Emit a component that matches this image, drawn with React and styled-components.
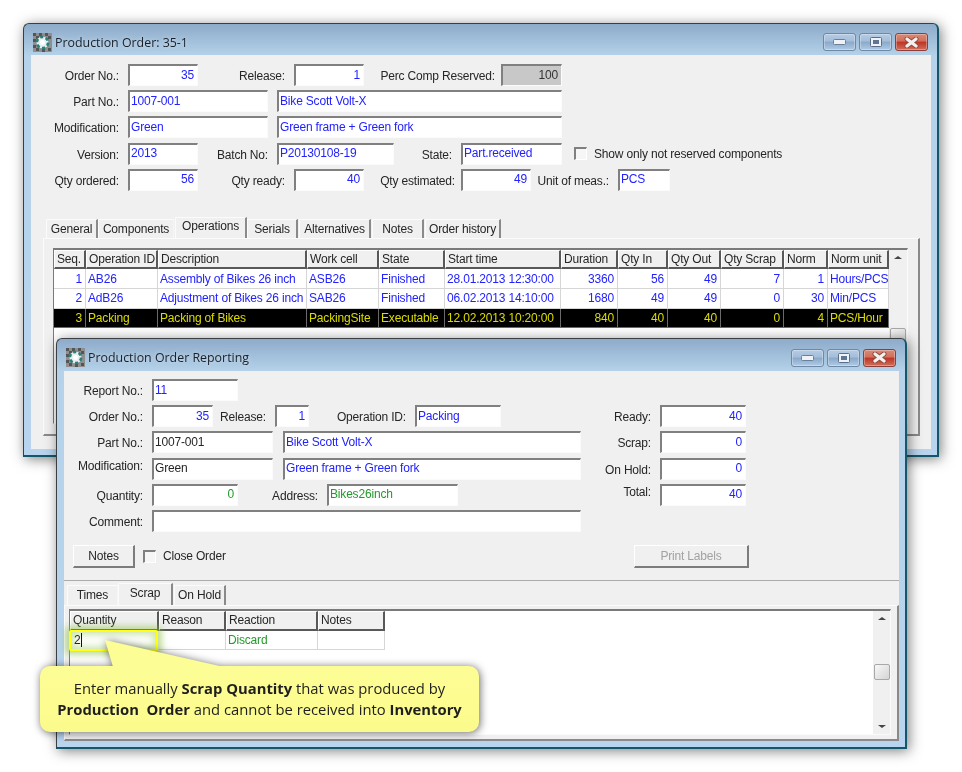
import React from "react";
import styled, { createGlobalStyle } from "styled-components";

const GlobalStyle = createGlobalStyle`
  html, body { margin: 0; padding: 0; background: #fff; }
  body { font-family: "Liberation Sans", Arial, sans-serif; font-size: 12px; letter-spacing: -0.18px; color: #262626; }
`;

// --- Desktop and windows ---
const Desktop = styled.div`
  position: relative;
  width: 962px;
  height: 772px;
  overflow: hidden;
  background: #fff;
  filter: blur(0.4px);
`;

const Shell = styled.section`
  position: absolute;
  left: ${(p) => p.$left}px;
  top: ${(p) => p.$top}px;
  width: ${(p) => p.$w}px;
  height: ${(p) => p.$h}px;
  box-sizing: border-box;
  display: flex;
  flex-direction: column;
  padding: 0 6px 6px 7px;
  border: 1px solid #3a3f44;
  border-right: 2px solid #14566a;
  border-bottom: 2px solid #14566a;
  border-radius: 6px 6px 0 0;
  background: linear-gradient(#8dabca 0, #b5d2ea 32px, #b8d4ee 100%);
  box-shadow: 2px 2px 13px rgba(0, 0, 0, 0.5);
`;

const TitleBar = styled.header`
  flex: none;
  height: ${(p) => p.$h}px;
  box-sizing: border-box;
  display: flex;
  align-items: center;
  padding: 5px 3px 0 2px;
`;

const TitleText = styled.span`
  margin-left: 3px;
  font-family: "Open Sans", sans-serif;
  font-size: 12.4px;
  letter-spacing: 0;
  color: #18202a;
  text-shadow: 0 0 4px rgba(255, 255, 255, 0.5);
`;

const Controls = styled.div`
  margin-left: auto;
  display: flex;
  gap: 3px;
`;

const CtrlButton = styled.div`
  width: 33px;
  height: 18px;
  box-sizing: border-box;
  display: flex;
  align-items: center;
  justify-content: center;
  border: 1px solid ${(p) => (p.$close ? "#8a4038" : "#6f88a5")};
  border-radius: 3px;
  box-shadow: inset 0 0 0 1px rgba(255, 255, 255, 0.3);
  background: ${(p) =>
    p.$close
      ? "linear-gradient(#d98a78 0, #cf6f5c 45%, #bd3323 50%, #d0705c 100%)"
      : "linear-gradient(#b5cce4 0, #a3bdd9 45%, #8aa8c8 50%, #aecce6 100%)"};
`;

const Client = styled.div`
  flex: 1;
  min-height: 0;
  display: flex;
  flex-direction: column;
  background: #f0f0f0;
`;

// --- Form parts ---
const Form = styled.div`
  display: flex;
  flex-direction: column;
  gap: 4.2px;
  padding-top: ${(p) => p.$top}px;
`;

const Row = styled.div`
  display: flex;
  align-items: center;
  height: 22px;
`;

const Label = styled.span`
  flex: none;
  width: ${(p) => p.$w}px;
  box-sizing: border-box;
  padding-right: ${(p) => p.$pad ?? 9}px;
  text-align: right;
  white-space: nowrap;
  position: relative;
  top: ${(p) => (p.$raised ? -3 : 1)}px;
`;

const Field = styled.div`
  flex: none;
  width: ${(p) => p.$w}px;
  height: 22px;
  margin-left: ${(p) => p.$ml ?? 0}px;
  box-sizing: border-box;
  padding: 0 3px 2px 1px;
  display: flex;
  align-items: center;
  justify-content: ${(p) => (p.$right ? "flex-end" : "flex-start")};
  white-space: nowrap;
  border-top: 2px solid #808080;
  border-left: 2px solid #808080;
  border-right: 1px solid #fbfbfb;
  border-bottom: 1px solid #fbfbfb;
  background: ${(p) => (p.$gray ? "#c8c8c8" : "#fff")};
  color: ${(p) => p.$color || "#2222ff"};
`;

const Check = styled.span`
  flex: none;
  width: 13px;
  height: 13px;
  margin-left: ${(p) => p.$ml}px;
  box-sizing: border-box;
  border-top: 2px solid #808080;
  border-left: 2px solid #808080;
  border-right: 1px solid #fff;
  border-bottom: 1px solid #fff;
  background: #f6f6f6;
`;

const CheckText = styled.span`
  margin-left: 7px;
  white-space: nowrap;
`;

const ButtonRow = styled.div`
  display: flex;
  justify-content: space-between;
  align-items: center;
  margin-top: 13px;
  padding: 0 150px 12px 9px;
  border-bottom: 1px solid #ababab;
`;

const ButtonGroup = styled.div`
  display: flex;
  align-items: center;
`;

const Button = styled.div`
  width: ${(p) => p.$w}px;
  height: 23px;
  box-sizing: border-box;
  display: flex;
  align-items: center;
  justify-content: center;
  border-top: 1px solid #fff;
  border-left: 1px solid #fff;
  border-right: 2px solid #7c7c7c;
  border-bottom: 2px solid #7c7c7c;
  color: ${(p) => (p.$disabled ? "#a2a2a2" : "#262626")};
`;

// --- Tabs ---
const TabStrip = styled.div`
  flex: none;
  display: flex;
  align-items: flex-end;
  height: ${(p) => p.$h}px;
  margin: ${(p) => p.$margin};
`;

const Tab = styled.div`
  width: ${(p) => p.$w}px;
  height: ${(p) => (p.$active ? "100%" : "calc(100% - 2px)")};
  box-sizing: border-box;
  display: flex;
  align-items: center;
  justify-content: center;
  border-left: 1px solid #fbfbfb;
  border-top: 1px solid #fbfbfb;
  border-right: ${(p) => (p.$plain ? "1px solid #f6f6f6" : "2px solid #8a8a8a")};
  background: #f0f0f0;
  padding-bottom: ${(p) => (p.$active ? 3 : 0)}px;
  margin-right: ${(p) => p.$mr ?? 0}px;
`;

const TabPanel = styled.div`
  flex: 1;
  min-height: 0;
  display: flex;
  box-sizing: border-box;
  margin: ${(p) => p.$margin};
  padding: ${(p) => p.$padding};
  border-top: 1px solid #fbfbfb;
  border-left: 1px solid #fbfbfb;
  border-right: 2px solid #8a8a8a;
  border-bottom: 2px solid #8a8a8a;
`;

// --- Grid ---
const Sunken = styled.div`
  flex: 1;
  display: flex;
  box-sizing: border-box;
  border-top: 2px solid #7a7a7a;
  border-left: 1px solid #7a7a7a;
  border-right: 1px solid #fafafa;
  border-bottom: 1px solid #fafafa;
  background: #fff;
`;

const GridWrap = styled.div`
  flex: 1;
  min-width: 0;
`;

const Grid = styled.div`
  display: grid;
  width: fit-content;
  grid-template-columns: ${(p) => p.$cols};
  grid-auto-rows: 19.6px;
`;

const Head = styled.div`
  box-sizing: border-box;
  display: flex;
  align-items: center;
  padding: 0 0 0 2px;
  white-space: nowrap;
  overflow: hidden;
  background: #f0f0f0;
  border-top: 1px solid #fff;
  border-left: 1px solid #fff;
  border-right: 2px solid #585858;
  border-bottom: 2px solid #585858;
`;

const Cell = styled.div`
  box-sizing: border-box;
  display: flex;
  align-items: center;
  justify-content: ${(p) => (p.$right ? "flex-end" : "flex-start")};
  padding: 0 3px 0 2px;
  white-space: nowrap;
  overflow: hidden;
  background: ${(p) => (p.$sel ? "#000" : "#fff")};
  color: ${(p) => (p.$sel ? "#dcdc00" : p.$color || "#2222ff")};
  border-right: 1px solid ${(p) => (p.$sel ? "#6a6a6a" : "#d6d6d6")};
  border-bottom: 1px solid ${(p) => (p.$sel ? "#6a6a6a" : "#d6d6d6")};
`;

const EditCell = styled.div`
  position: relative;
  z-index: 1;
  box-sizing: border-box;
  display: flex;
  align-items: center;
  margin: -1px 1px -1px -1px;
  padding-left: 3px;
  color: #262626;
  border: 2px solid #ffff10;
  border-radius: 2px;
  background: #fff;
  box-shadow: 0 0 6px 4px rgba(132, 190, 60, 0.5), inset 0 0 7px 3px rgba(132, 190, 60, 0.4);
`;

const Caret = styled.span`
  border-right: 1px solid #111;
  height: 14px;
  line-height: 14px;
`;

const ScrollBar = styled.div`
  flex: none;
  width: ${(p) => p.$w}px;
  box-sizing: border-box;
  display: flex;
  flex-direction: column;
  justify-content: space-between;
  align-items: center;
  padding: 6px 0;
  background: #f0f0f0;
`;

const Arrow = styled.span`
  width: 0;
  height: 0;
  border-left: 4px solid transparent;
  border-right: 4px solid transparent;
  ${(p) => (p.$down ? "border-top: 3px solid #444;" : "border-bottom: 3px solid #444;")}
`;

const Thumb = styled.span`
  width: 16px;
  height: 16px;
  box-sizing: border-box;
  border: 1px solid #a8a8a8;
  border-radius: 2px;
  background: linear-gradient(135deg, #f8f8f8, #d4d4d4);
`;

// --- Yellow note over the scrap grid ---
const Note = styled.div`
  position: absolute;
  z-index: 2;
  left: 40px;
  top: 640px;
  width: 439px;
  height: 92px;
  filter: drop-shadow(1px 1px 4px rgba(0, 0, 0, 0.6));
`;

const NoteTail = styled.div`
  position: absolute;
  left: 64px;
  top: 0;
  width: 120px;
  height: 27px;
  background: #fdfd96;
  clip-path: polygon(1px 0, 9px 100%, 120px 100%);
`;

const NoteBody = styled.div`
  position: absolute;
  left: 0;
  right: 0;
  bottom: 0;
  height: 66px;
  box-sizing: border-box;
  display: flex;
  flex-direction: column;
  align-items: center;
  justify-content: center;
  border-radius: 10px;
  background: linear-gradient(#fdfd96, #fbfb8c);
  font-family: "Open Sans", sans-serif;
  font-size: 14.8px;
  letter-spacing: 0;
  line-height: 21px;
  color: #1f1f1f;
  white-space: pre;

  b {
    font-weight: 700;
  }
`;

const AppIcon = () => (
  <svg width="19" height="19" viewBox="0 0 19 19">
    <rect width="19" height="19" fill="#8f8f8f" />
    <path d="M0 0h3v3H0zM6 0h3v3H6zM12 0h3v3h-3zM3 3h3v3H3zM15 3h3v3h-3zM0 6h3v3H0zM0 12h3v3H0zM3 15h3v3H3zM15 15h3v3h-3zM9 16h3v3H9z" fill="#555" />
    <circle cx="9.5" cy="9.5" r="6" fill="#e8eeee" />
    <circle cx="9.5" cy="9.5" r="5.6" fill="none" stroke="#27807c" strokeWidth="2.6" strokeDasharray="3.4 2.4" />
    <circle cx="9.5" cy="9.5" r="2.4" fill="#fff" />
  </svg>
);

const MinGlyph = () => (
  <svg width="13" height="6" viewBox="0 0 13 6">
    <rect x="0.5" y="0.5" width="12" height="5" rx="1" fill="#eef2f7" stroke="#6a7f98" />
  </svg>
);

const MaxGlyph = () => (
  <svg width="12" height="10" viewBox="0 0 12 10">
    <rect x="0.5" y="0.5" width="11" height="9" rx="1" fill="#eef2f6" stroke="#5a6f8a" />
    <rect x="3" y="3" width="6" height="4" fill="#5d7695" />
  </svg>
);

const CloseGlyph = () => (
  <svg width="15" height="11" viewBox="0 0 15 11">
    <path d="M3 2l9 7M12 2l-9 7" stroke="#8a4a40" strokeWidth="5" strokeLinecap="round" />
    <path d="M3 2l9 7M12 2l-9 7" stroke="#f4efec" strokeWidth="3.2" strokeLinecap="round" />
  </svg>
);

const WindowControls = () => (
  <Controls>
    <CtrlButton><MinGlyph /></CtrlButton>
    <CtrlButton><MaxGlyph /></CtrlButton>
    <CtrlButton $close><CloseGlyph /></CtrlButton>
  </Controls>
);

const GREEN = "#239a2a";

const opColumns = [
  { name: "Seq.", w: 32, right: true },
  { name: "Operation ID", w: 72 },
  { name: "Description", w: 149 },
  { name: "Work cell", w: 72 },
  { name: "State", w: 66 },
  { name: "Start time", w: 116 },
  { name: "Duration", w: 57, right: true },
  { name: "Qty In", w: 50, right: true },
  { name: "Qty Out", w: 53, right: true },
  { name: "Qty Scrap", w: 63, right: true },
  { name: "Norm", w: 44, right: true },
  { name: "Norm unit", w: 61 },
];

const opRows = [
  ["1", "AB26", "Assembly of Bikes 26 inch", "ASB26", "Finished", "28.01.2013 12:30:00", "3360", "56", "49", "7", "1", "Hours/PCS"],
  ["2", "AdB26", "Adjustment of Bikes 26 inch", "SAB26", "Finished", "06.02.2013 14:10:00", "1680", "49", "49", "0", "30", "Min/PCS"],
  ["3", "Packing", "Packing of Bikes", "PackingSite", "Executable", "12.02.2013 10:20:00", "840", "40", "40", "0", "4", "PCS/Hour"],
];

const orderTabs = [
  { name: "General", w: 52 },
  { name: "Components", w: 76, plain: true, mr: 1 },
  { name: "Operations", w: 72, active: true },
  { name: "Serials", w: 51, mr: 1 },
  { name: "Alternatives", w: 72, mr: 1 },
  { name: "Notes", w: 52, mr: 1 },
  { name: "Order history", w: 76 },
];

const reportTabs = [
  { name: "Times", w: 51, plain: true },
  { name: "Scrap", w: 55, active: true, mr: 1 },
  { name: "On Hold", w: 52 },
];

const Tabs = ({ items, h, margin }) => (
  <TabStrip $h={h} $margin={margin}>
    {items.map((t) => (
      <Tab key={t.name} $w={t.w} $active={t.active} $plain={t.plain} $mr={t.mr}>
        {t.name}
      </Tab>
    ))}
  </TabStrip>
);

const ProductionOrder = () => (
  <Shell $left={23} $top={23} $w={916} $h={434}>
    <TitleBar $h={31}>
      <AppIcon />
      <TitleText>Production Order: 35-1</TitleText>
      <WindowControls />
    </TitleBar>
    <Client>
      <Form $top={9}>
        <Row>
          <Label $w={97}>Order No.:</Label>
          <Field $w={70} $right>35</Field>
          <Label $w={96}>Release:</Label>
          <Field $w={70} $right>1</Field>
          <Label $w={137} $pad={6}>Perc Comp Reserved:</Label>
          <Field $w={61} $right $gray $color="#333">100</Field>
        </Row>
        <Row>
          <Label $w={97}>Part No.:</Label>
          <Field $w={140}>1007-001</Field>
          <Field $w={285} $ml={9}>Bike Scott Volt-X</Field>
        </Row>
        <Row>
          <Label $w={97}>Modification:</Label>
          <Field $w={140}>Green</Field>
          <Field $w={285} $ml={9}>Green frame + Green fork</Field>
        </Row>
        <Row>
          <Label $w={97}>Version:</Label>
          <Field $w={70}>2013</Field>
          <Label $w={79}>Batch No:</Label>
          <Field $w={117}>P20130108-19</Field>
          <Label $w={67}>State:</Label>
          <Field $w={101}>Part.received</Field>
          <Check $ml={12} />
          <CheckText>Show only not reserved components</CheckText>
        </Row>
        <Row>
          <Label $w={97}>Qty ordered:</Label>
          <Field $w={70} $right>56</Field>
          <Label $w={96}>Qty ready:</Label>
          <Field $w={70} $right>40</Field>
          <Label $w={97} $pad={6}>Qty estimated:</Label>
          <Field $w={70} $right>49</Field>
          <Label $w={87}>Unit of meas.:</Label>
          <Field $w={52}>PCS</Field>
        </Row>
      </Form>
      <Tabs items={orderTabs} h={21} margin="26px 0 0 15px" />
      <TabPanel $margin="0 11px 13px 12px" $padding="9px 10px 10px 9px">
        <Sunken>
          <GridWrap>
            <Grid $cols={opColumns.map((c) => c.w + "px").join(" ")}>
              {opColumns.map((c) => (
                <Head key={c.name}>{c.name}</Head>
              ))}
              {opRows.map((row, r) =>
                row.map((value, i) => (
                  <Cell key={r + "-" + i} $right={opColumns[i].right} $sel={r === 2}>
                    {value}
                  </Cell>
                ))
              )}
            </Grid>
          </GridWrap>
          <ScrollBar $w={18}>
            <Arrow />
            <Thumb />
            <Arrow $down />
          </ScrollBar>
        </Sunken>
      </TabPanel>
    </Client>
  </Shell>
);

const OrderReporting = () => (
  <Shell $left={56} $top={338} $w={851} $h={411}>
    <TitleBar $h={32}>
      <AppIcon />
      <TitleText>Production Order Reporting</TitleText>
      <WindowControls />
    </TitleBar>
    <Client>
      <Form $top={8}>
        <Row>
          <Label $w={88}>Report No.:</Label>
          <Field $w={86}>11</Field>
        </Row>
        <Row>
          <Label $w={88}>Order No.:</Label>
          <Field $w={61} $right>35</Field>
          <Label $w={62}>Release:</Label>
          <Field $w={34} $right>1</Field>
          <Label $w={106}>Operation ID:</Label>
          <Field $w={86}>Packing</Field>
          <Label $w={159}>Ready:</Label>
          <Field $w={86} $right>40</Field>
        </Row>
        <Row>
          <Label $w={88}>Part No.:</Label>
          <Field $w={121} $color="#262626">1007-001</Field>
          <Field $w={298} $ml={10}>Bike Scott Volt-X</Field>
          <Label $w={79}>Scrap:</Label>
          <Field $w={86} $right>0</Field>
        </Row>
        <Row>
          <Label $w={88} $raised>Modification:</Label>
          <Field $w={121} $color="#262626">Green</Field>
          <Field $w={298} $ml={10}>Green frame + Green fork</Field>
          <Label $w={79}>On Hold:</Label>
          <Field $w={86} $right>0</Field>
        </Row>
        <Row>
          <Label $w={88}>Quantity:</Label>
          <Field $w={86} $right $color={GREEN}>0</Field>
          <Label $w={89}>Address:</Label>
          <Field $w={131} $color={GREEN}>Bikes26inch</Field>
          <Label $w={202} $raised>Total:</Label>
          <Field $w={86} $right>40</Field>
        </Row>
        <Row>
          <Label $w={88}>Comment:</Label>
          <Field $w={429} />
        </Row>
      </Form>
      <ButtonRow>
        <ButtonGroup>
          <Button $w={62}>Notes</Button>
          <Check $ml={8} />
          <CheckText>Close Order</CheckText>
        </ButtonGroup>
        <Button $w={115} $disabled>Print Labels</Button>
      </ButtonRow>
      <Tabs items={reportTabs} h={22} margin="2px 0 0 3px" />
      <TabPanel $margin="0" $padding="3px 6px 4px 4px">
        <Sunken>
          <GridWrap>
            <Grid $cols="89px 67px 92px 67px">
              <Head>Quantity</Head>
              <Head>Reason</Head>
              <Head>Reaction</Head>
              <Head>Notes</Head>
              <EditCell><Caret>2</Caret></EditCell>
              <Cell />
              <Cell $color={GREEN}>Discard</Cell>
              <Cell />
            </Grid>
          </GridWrap>
          <ScrollBar $w={17}>
            <Arrow />
            <Thumb />
            <Arrow $down />
          </ScrollBar>
        </Sunken>
      </TabPanel>
    </Client>
  </Shell>
);

export default function App() {
  return (
    <Desktop>
      <GlobalStyle />
      <ProductionOrder />
      <OrderReporting />
      <Note>
        <NoteTail />
        <NoteBody>
          <span>Enter manually <b>Scrap Quantity</b> that was produced by</span>
          <span><b>Production  Order</b> and cannot be received into <b>Inventory</b></span>
        </NoteBody>
      </Note>
    </Desktop>
  );
}
